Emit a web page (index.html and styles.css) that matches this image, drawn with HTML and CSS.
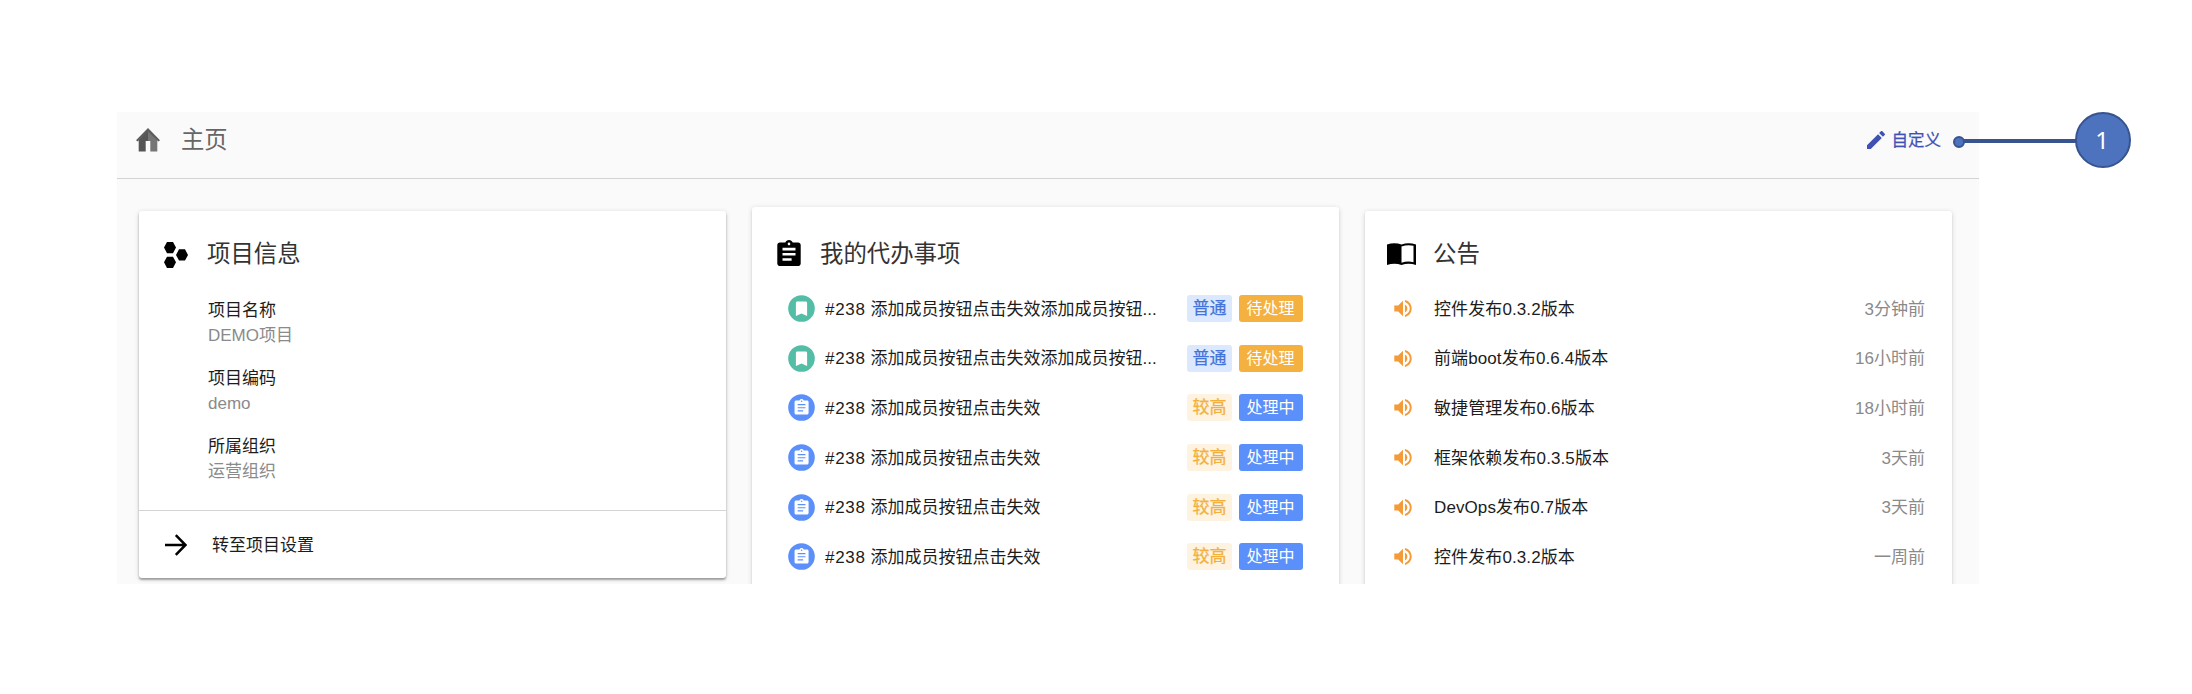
FILE: index.html
```html
<!DOCTYPE html>
<html lang="zh-CN">
<head>
<meta charset="utf-8">
<title>主页</title>
<link rel="stylesheet" href="styles.css">
</head>
<body>
<svg class="defs" width="0" height="0">
  <symbol id="assignment" viewBox="3 1 18 20"><path d="M19 3h-4.18C14.4 1.84 13.3 1 12 1c-1.3 0-2.4.84-2.82 2H5c-1.1 0-2 .9-2 2v14c0 1.100.9 2 2 2h14c1.100 0 2-.9 2-2V5c0-1.100-.9-2-2-2zm-7 0c.55 0 1 .45 1 1s-.45 1-1 1-1-.45-1-1 .45-1 1-1zm2 14H7v-2h7v2zm3-4H7v-2h10v2zm0-4H7V7h10v2z"/></symbol>
  <symbol id="story" viewBox="0 0 27 27"><circle cx="13.500" cy="13.500" r="13.300" fill="#54bda5"/><path d="M9.300 6.500h8.400a1.400 1.400 0 0 1 1.400 1.400V21l-5.600-2.400L7.900 21V7.900a1.400 1.400 0 0 1 1.400-1.400z" fill="#fff"/></symbol>
  <symbol id="task" viewBox="0 0 27 27"><circle cx="13.500" cy="13.500" r="13.300" fill="#5b8ff9"/><g transform="translate(4.200 4.200) scale(.78)" fill="#fff"><path d="M19 3h-4.180C14.400 1.840 13.300 1 12 1c-1.300 0-2.400.84-2.820 2H5c-1.100 0-2 .9-2 2v14c0 1.100.9 2 2 2h14c1.100 0 2-.9 2-2V5c0-1.100-.9-2-2-2zm-7 0c.55 0 1 .45 1 1s-.45 1-1 1-1-.45-1-1 .45-1 1-1zm2 14H7v-1.500h7V17zm3-4H7v-1.500h10V13zm0-4H7V7.500h10V9z"/></g></symbol>
  <symbol id="volume" viewBox="3 3.200 18 17.600"><path d="M3 9v6h4l5 5V4L7 9H3zm13.500 3c0-1.770-1.020-3.290-2.500-4.030v8.050c1.480-.73 2.500-2.250 2.500-4.020zM14 3.230v2.060c2.890.86 5 3.540 5 6.710s-2.110 5.850-5 6.710v2.060c4.010-.91 7-4.490 7-8.770s-2.990-7.860-7-8.770z"/></symbol>
</svg>
<div class="stage">
  <main class="panel">
    <header class="topbar">
      <svg class="home" viewBox="0 0 24 24"><path d="M12 2v11H9.700v10.500H2.700V12z" fill="#555"/><path d="M12 2l9.300 10v11.500h-7V13H12z" fill="#757575"/><path d="M12 0l12 12.200-1.600 1.400L12 3.400 1.600 13.600 0 12.200z" fill="#5c5c5c"/></svg>
      <h1 class="page-title">主页</h1>
      <a class="customize"><svg viewBox="3 3 18 18"><path d="M3 17.250V21h3.750L17.810 9.940l-3.750-3.750L3 17.250zM20.710 7.040c.39-.39.39-1.020 0-1.410l-2.340-2.340c-.39-.39-1.020-.39-1.410 0l-1.830 1.830 3.750 3.750 1.830-1.830z"/></svg><span>自定义</span></a>
    </header>
    <div class="cards">
      <section class="card info">
        <div class="card-head">
          <svg class="hexes" viewBox="0 0 24 26"><path d="M3 0h6l3 5.600-3 5.700H3L0 5.600zM15 7.300h6l3 5.600-3 5.700h-6l-3-5.700zM3 14.700h6l3 5.600L9 26H3l-3-5.700z"/></svg>
          <h2>项目信息</h2>
        </div>
        <dl class="fields">
          <div><dt>项目名称</dt><dd>DEMO项目</dd></div>
          <div><dt>项目编码</dt><dd>demo</dd></div>
          <div><dt>所属组织</dt><dd>运营组织</dd></div>
        </dl>
        <a class="go"><svg viewBox="0 0 22 22"><path d="M0 11h20M10.800 1.200l9.700 9.800-9.700 9.800" fill="none" stroke="#000" stroke-width="2.500"/></svg><span>转至项目设置</span></a>
      </section>
      <section class="card todo">
        <div class="card-head">
          <svg class="clip"><use href="#assignment"/></svg>
          <h2>我的代办事项</h2>
        </div>
        <ul class="rows">
          <li><svg class="kind"><use href="#story"/></svg><span class="subject"><b>#238</b>添加成员按钮点击失效添加成员按钮...</span><span class="priority normal">普通</span><span class="status waiting">待处理</span></li>
          <li><svg class="kind"><use href="#story"/></svg><span class="subject"><b>#238</b>添加成员按钮点击失效添加成员按钮...</span><span class="priority normal">普通</span><span class="status waiting">待处理</span></li>
          <li><svg class="kind"><use href="#task"/></svg><span class="subject"><b>#238</b>添加成员按钮点击失效</span><span class="priority high">较高</span><span class="status doing">处理中</span></li>
          <li><svg class="kind"><use href="#task"/></svg><span class="subject"><b>#238</b>添加成员按钮点击失效</span><span class="priority high">较高</span><span class="status doing">处理中</span></li>
          <li><svg class="kind"><use href="#task"/></svg><span class="subject"><b>#238</b>添加成员按钮点击失效</span><span class="priority high">较高</span><span class="status doing">处理中</span></li>
          <li><svg class="kind"><use href="#task"/></svg><span class="subject"><b>#238</b>添加成员按钮点击失效</span><span class="priority high">较高</span><span class="status doing">处理中</span></li>
        </ul>
      </section>
      <section class="card notice">
        <div class="card-head">
          <svg class="book" viewBox="0 0 29 22"><path d="M0 1.500Q7.500-1 14.500 1.500 21.500-1 29 1.500V22q-7.500-2.500-14.500 0Q7.500 19.500 0 22zM14.500 3.500v16.300q6-2.400 12-.6V2.800q-6-1.500-12 .7z" fill-rule="evenodd"/></svg>
          <h2>公告</h2>
        </div>
        <ul class="rows">
          <li><svg class="vol"><use href="#volume"/></svg><span class="news">控件发布0.3.2版本</span><time>3分钟前</time></li>
          <li><svg class="vol"><use href="#volume"/></svg><span class="news">前端boot发布0.6.4版本</span><time>16小时前</time></li>
          <li><svg class="vol"><use href="#volume"/></svg><span class="news">敏捷管理发布0.6版本</span><time>18小时前</time></li>
          <li><svg class="vol"><use href="#volume"/></svg><span class="news">框架依赖发布0.3.5版本</span><time>3天前</time></li>
          <li><svg class="vol"><use href="#volume"/></svg><span class="news">DevOps发布0.7版本</span><time>3天前</time></li>
          <li><svg class="vol"><use href="#volume"/></svg><span class="news">控件发布0.3.2版本</span><time>一周前</time></li>
        </ul>
      </section>
    </div>
  </main>
  <div class="callout"><i class="dot"></i><i class="line"></i><span class="number">1</span></div>
</div>
</body>
</html>
```
FILE: styles.css
```css
* { box-sizing: border-box; }
body {
  margin: 0;
  background: #fff;
  color: #1c1c1c;
  font: 17px/26px "Liberation Sans", "Noto Sans CJK SC", sans-serif;
}
h1, h2, dl, dd, ul { margin: 0; padding: 0; font-weight: 400; }
ul { list-style: none; }
svg { display: block; flex: none; }
.defs { position: absolute; }
.stage { position: relative; height: 694px; padding: 112px 213px 110px 117px; overflow: hidden; }
.panel { height: 472px; background: #fafafa; overflow: hidden; }
.topbar {
  display: flex;
  align-items: center;
  height: 67px;
  padding: 0 38px 10px 19px;
  border-bottom: 1px solid #d3d3d3;
}
.home { width: 24px; height: 24px; }
.page-title { margin-left: 21px; font-size: 23.300px; line-height: 34px; color: #666; }
.customize {
  display: flex;
  align-items: center;
  gap: 7px;
  margin-left: auto;
  color: #3f51b5;
  font-size: 16.500px;
  font-weight: 400;
  -webkit-text-stroke: .25px #3f51b5;
}
.customize svg { width: 18px; height: 18px; fill: #3f51b5; }
.cards {
  display: grid;
  grid-template-columns: repeat(3, 587px);
  gap: 26px;
  align-items: start;
  padding: 28px 0 0 22px;
}
.card {
  margin-top: 4px;
  background: #fff;
  border-radius: 3px;
  box-shadow: 0 1px 5px rgba(0, 0, 0, .16), 0 2px 2px rgba(0, 0, 0, .08);
}
.card-head { display: flex; align-items: center; height: 36px; margin-top: 25px; }
.card-head h2 { font-size: 23.400px; line-height: 36px; color: #333; }
.info, .todo, .notice { display: flow-root; }
.info { height: 367px; box-shadow: 0 1px 5px rgba(0, 0, 0, .16), 0 2px 2px rgba(0, 0, 0, .3); }
.todo { height: 420px; margin-top: 0; }
.notice { height: 420px; }
.hexes { width: 24px; height: 26px; margin: 1px 19px 0 25px; }
.fields { display: grid; gap: 16px; height: 239px; align-content: start; padding: 25px 0 0 69px; border-bottom: 1px solid #d4d4d4; }
.fields dt { padding-top: 1px; line-height: 25px; }
.fields dd { color: #8a8a8a; }
.go { display: flex; align-items: center; height: 66px; padding: 2px 0 0 26px; }
.go svg { width: 22px; height: 22px; margin-right: 25px; }
.go span { padding-top: 1px; }
.todo .card-head { margin-top: 29px; }
.clip { width: 24px; height: 26px; margin: -2px 20px 0 25px; }
.card-head .clip + h2 { margin-left: -1px; }
.rows { margin-top: 12px; }
.rows li { display: flex; align-items: center; height: 49.600px; }
.kind { width: 27px; height: 27px; margin: 0 10px 0 36px; }
.subject { width: 362px; padding-top: 2px; white-space: nowrap; }
.subject b { display: inline-block; width: 45.500px; font-weight: 400; letter-spacing: .7px; }
.priority, .status { height: 27px; border-radius: 3px; text-align: center; }
.priority { width: 45px; margin-right: 6.500px; line-height: 28px; -webkit-text-stroke: .25px currentColor; }
.normal { background: #dce8fd; color: #4373d9; }
.high { background: #fdf3e0; color: #f3b03d; }
.status { width: 64px; color: #fff; font-size: 16px; line-height: 27px; }
.waiting { background: #f4b13f; }
.doing { background: #5b8ff9; }
.book { width: 29px; height: 22px; margin: 0 17px 0 22px; }
.vol { width: 18px; height: 17px; margin: 0 22px 0 29px; fill: #f29b38; }
.news { padding-top: 2px; letter-spacing: .1px; }
.rows time { margin-left: auto; padding: 2px 27px 0 0; color: #8a8a8a; }
.callout { position: absolute; top: 112px; left: 1953px; display: flex; align-items: center; height: 56px; }
.dot { width: 12px; height: 12px; margin-top: 4px; border: 2px solid #375490; border-radius: 50%; background: #4d72be; }
.line { width: 113px; height: 4px; margin: 2px -2px 0 -1px; background: #375490; }
.number {
  width: 56px;
  height: 56px;
  padding-right: 2px;
  border: 2px solid #375490;
  border-radius: 50%;
  background: #4d72be;
  color: #fff;
  font: 24px/51px "Noto Sans", sans-serif;
  text-align: center;
}
```
